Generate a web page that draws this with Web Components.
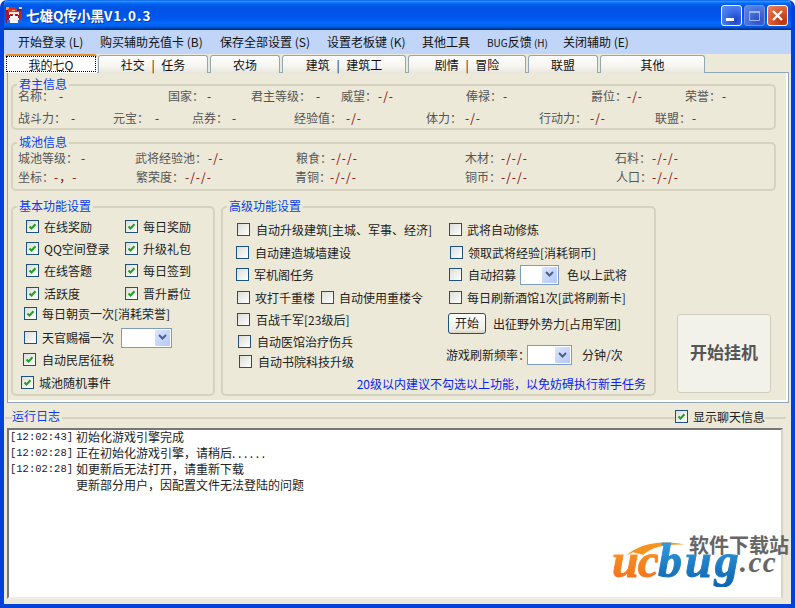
<!DOCTYPE html>
<html>
<head>
<meta charset="utf-8">
<style>
  html, body { margin: 0; padding: 0; background: #fff; }
  body { width: 795px; height: 608px; overflow: hidden; font: 12px/16px "Noto Sans CJK SC", "Liberation Sans", sans-serif; color: #222; }
</style>
</head>
<body>
<xp-window caption="七雄Q传小黑" version="V1.0.3">
  <xp-menu></xp-menu>
  <xp-tabs></xp-tabs>
  <main-panel></main-panel>
  <log-panel></log-panel>
</xp-window>

<script>
// ---- ventana con marco azul y barra de titulo
class XpWindow extends HTMLElement {
  constructor() {
    super();
    this.attachShadow({ mode: "open" });
    this.shadowRoot.innerHTML = `
    <style>
      :host { display: block; width: 795px; height: 608px; position: relative; box-sizing: border-box; }
      .frame { height: 608px; box-sizing: border-box; background: #ece9d8; border-radius: 7px 7px 0 0; overflow: hidden;
        border: solid #0342d8; border-width: 0 4px 4px 4px; display: flex; flex-direction: column; }
      .title { height: 30px; margin: 0 -4px; flex: none; display: flex; align-items: center; padding: 0 5px 0 6px;
        background: linear-gradient(#0058ee 0,#3593ff 4%,#288eff 6%,#127dff 8%,#036ffc 10%,#0262ee 14%,#0057e5 20%,#0054e3 24%,#0055eb 56%,#005bf5 66%,#026afe 76%,#0062ef 86%,#0052d6 92%,#0040ab 94%,#003092 100%); }
      .title svg.logo { width: 16px; height: 16px; flex: none; }
      .caption { margin-left: 4px; color: #fff; font-weight: 700; font-size: 13.5px; line-height: 18px; text-shadow: 1px 1px 0 #0a3aa8; flex: 1; white-space: nowrap; }
      .caption i { font-style: normal; letter-spacing: 1.1px; }
      .btns { display: flex; gap: 2px; margin-right: 2px; }
      .btn { width: 21px; height: 21px; box-sizing: border-box; border: 1px solid #fff; border-radius: 3px; display: block; }
      .min { background: radial-gradient(circle at 70% 75%, #1c44c8 0, #3f74ea 55%, #5c8df0 100%); }
      .max { background: radial-gradient(circle at 70% 75%, #2a50c8 0, #4b75dc 60%, #6289e4 100%); border-color: #6d8fe6; }
      .close { background: radial-gradient(circle at 75% 80%, #b8350f 0, #dc5a30 55%, #ea8a68 100%); }
    </style>
    <div class="frame">
      <div class="title">
        <svg class="logo" viewBox="0 0 16 16" shape-rendering="crispEdges">
          <rect width="16" height="16" fill="#8a1a2a"/>
          <rect x="0" y="0" width="3" height="3" fill="#f0a020"/>
          <rect x="3" y="0" width="6" height="2" fill="#d8242c"/>
          <rect x="9" y="0" width="4" height="2" fill="#2a4fd0"/>
          <rect x="13" y="0" width="3" height="2" fill="#f4d0a0"/>
          <rect x="2" y="2" width="11" height="3" fill="#e0342e"/>
          <rect x="6" y="3" width="3" height="1" fill="#ffb080"/>
          <rect x="11" y="2" width="2" height="2" fill="#28307a"/>
          <rect x="0" y="5" width="3" height="8" fill="#a8162a"/>
          <rect x="13" y="4" width="3" height="9" fill="#c8202c"/>
          <rect x="3" y="5" width="10" height="3" fill="#ffe8d8"/>
          <rect x="4" y="8" width="8" height="3" fill="#fff"/>
          <rect x="4" y="7" width="3" height="2" fill="#c02030"/>
          <rect x="9" y="7" width="3" height="2" fill="#c02030"/>
          <rect x="5" y="8" width="1" height="1" fill="#182a80"/>
          <rect x="10" y="8" width="1" height="1" fill="#182a80"/>
          <rect x="3" y="11" width="10" height="3" fill="#f4f0f0"/>
          <rect x="1" y="13" width="3" height="3" fill="#3a6ae0"/>
          <rect x="4" y="14" width="8" height="2" fill="#fff"/>
          <rect x="12" y="13" width="4" height="3" fill="#2a5fd8"/>
        </svg>
        <span class="caption"></span>
        <div class="btns">
          <span class="btn min"><svg width="19" height="19"><rect x="4" y="12" width="8" height="3" fill="#fff"/></svg></span>
          <span class="btn max"><svg width="19" height="19"><path d="M4.5 5.5h10v9h-10z" fill="none" stroke="#9db6ee"/><rect x="4" y="5" width="11" height="2" fill="#9db6ee"/></svg></span>
          <span class="btn close"><svg width="19" height="19"><path d="M5 5l9 9M14 5l-9 9" stroke="#fff" stroke-width="2.4"/></svg></span>
        </div>
      </div>
      <slot></slot>
    </div>
    <ucbug-mark></ucbug-mark>`;
    this.shadowRoot.querySelector(".caption").innerHTML = `${this.getAttribute("caption")}<i>${this.getAttribute("version")}</i>`;
  }
}

// ---- menu
class XpMenu extends HTMLElement {
  constructor() {
    super();
    this.attachShadow({ mode: "open" });
    const items = [["开始登录 (L)", 14, 64], ["购买辅助充值卡 (B)", 18, 102], ["保存全部设置 (S)", 18, 89], ["设置老板键 (K)", 18, 77],
      ["其他工具", 18, 48], ['<small>BUG</small>反馈<small> (H)</small>', 17, 60], ["关闭辅助 (E)", 16, 67]];
    this.shadowRoot.innerHTML = `
    <style>
      :host { display: flex; height: 24px; background: #c1d5f8; align-items: center; flex: none; font-size: 12px; color: #111; }
      span { white-space: nowrap; display: block; }
      small { font-size: 10px; }
    </style>` + items.map(([t, gap, w]) => `<span style="margin-left:${gap}px;width:${w}px">${t}</span>`).join("");
  }
}

// ---- pestanas
class XpTabs extends HTMLElement {
  constructor() {
    super();
    this.attachShadow({ mode: "open" });
    const tabs = [["我的七Q", 92], ["社交 | 任务", 110], ["农场", 70], ["建筑 | 建筑工", 124], ["剧情 | 冒险", 118], ["联盟", 70], ["其他", 105]];
    this.shadowRoot.innerHTML = `
    <style>
      :host { display: flex; height: 19px; flex: none; padding-left: 1px; gap: 2px; align-items: flex-end; position: relative; z-index: 1; margin-bottom: -1px; }
      .tab { box-sizing: border-box; height: 18px; border: 1px solid #91a7b4; border-bottom: 0; border-radius: 3px 3px 0 0; text-align: center; line-height: 18px; font-size: 12px; color: #111; word-spacing: 4px;
        background: linear-gradient(#fff, #f6f5ef 60%, #e8e6dc); white-space: pre; }
      .on { height: 19px; background: #fff; border: 0; border-top: 2px solid #e68b2c; border-radius: 3px 3px 0 0; line-height: 15px; margin-right: -1px; position: relative; }
      .on b { position: absolute; left: 1px; right: 1px; top: 0; bottom: 1px; border: 1px dotted #000; font-weight: 400; }
    </style>` + tabs.map(([t, w], i) => i == 0
      ? `<div class="tab on" style="width:${w}px"><b>${t}</b></div>`
      : `<div class="tab" style="width:${w}px">${t}</div>`).join("");
  }
}

// ---- caja con titulo (groupbox)
class XpGroup extends HTMLElement {
  constructor() {
    super();
    this.attachShadow({ mode: "open" });
    this.shadowRoot.innerHTML = `
    <style>
      :host { display: block; position: relative; box-sizing: border-box; border: 2px solid #d5d2c0; border-radius: 5px; }
      .legend { position: absolute; left: 4px; top: -8px; padding: 0 2px; background: #ece9d8; color: #0a3fe8; font-size: 12px; line-height: 12px; white-space: nowrap; }
    </style>
    <span class="legend"></span><slot></slot>`;
    this.shadowRoot.querySelector(".legend").textContent = this.getAttribute("legend");
  }
}

// ---- etiqueta + valor en rojo oscuro
class InfoField extends HTMLElement {
  constructor() {
    super();
    this.attachShadow({ mode: "open" });
    const w = this.getAttribute("w"), lw = this.getAttribute("lw");
    this.shadowRoot.innerHTML = `
    <style>
      :host { display: flex; flex: none; width: ${w}px; white-space: nowrap; color: #555; font-size: 12px; line-height: 14px; }
      .l { width: ${lw}px; flex: none; }
      .v { color: #8a0000; letter-spacing: 1px; }
    </style>
    <span class="l">${this.getAttribute("label")}：</span><span class="v">${this.getAttribute("value")}</span>`;
  }
}

// ---- casilla de verificacion
class XpCheck extends HTMLElement {
  constructor() {
    super();
    this.attachShadow({ mode: "open" });
    const on = this.hasAttribute("checked");
    this.shadowRoot.innerHTML = `
    <style>
      :host { display: inline-flex; align-items: center; white-space: nowrap; font-size: 12px; line-height: 14px; color: #222; height: 13px; margin-left: var(--x, 0); }
      .box { width: 13px; height: 13px; flex: none; box-sizing: border-box; border: 1px solid #1c5180; background: linear-gradient(135deg, #dcdcd7, #fff); display: block; margin-right: var(--g, 5px); }
      svg { display: block; }
    </style>
    <span class="box">${on ? '<svg width="11" height="11"><path d="M2.5 5.5l2 2L8.5 3.2" fill="none" stroke="#21a121" stroke-width="2"/></svg>' : ""}</span><span><slot></slot></span>`;
  }
}

// ---- combo vacio
class XpCombo extends HTMLElement {
  constructor() {
    super();
    this.attachShadow({ mode: "open" });
    this.shadowRoot.innerHTML = `
    <style>
      :host { display: inline-flex; box-sizing: border-box; height: 20px; border: 1px solid #7f9db9; background: #fff; justify-content: flex-end; padding: 1px; flex: none; }
      .b { width: 15px; background: linear-gradient(135deg, #dbe6fd, #b3c8f8); border-radius: 1px; display: flex; align-items: center; justify-content: center; }
    </style>
    <span class="b"><svg width="9" height="7"><path d="M1 1l3.5 3.5L8 1" fill="none" stroke="#4d6185" stroke-width="2"/></svg></span>`;
  }
}

// ---- contenido de la primera pestana
class MainPanel extends HTMLElement {
  constructor() {
    super();
    this.attachShadow({ mode: "open" });
    this.shadowRoot.innerHTML = `
    <style>
      :host { display: block; box-sizing: border-box; height: 331px; flex: none; margin: 0 2px 0 3px; border: 1px solid #91a7b4; box-shadow: inset -2px -2px 0 #fff; padding: 11px 12px 0 3px; position: relative; }
      .lords { height: 46px; width: 765px; box-sizing: border-box; padding: 0 0 0 5px; }
      .city { height: 49px; width: 765px; box-sizing: border-box; margin-top: 12px; padding: 4px 0 0 5px; }
      .r { display: flex; height: 24px; align-items: center; }
      .lords .r:first-child { height: 20px; }
      .city .r { height: 19px; }
      .bottom { display: flex; margin-top: 15px; }
      .basic { width: 204px; height: 190px; box-sizing: border-box; flex: none; }
      .adv { width: 435px; height: 190px; box-sizing: border-box; margin-left: 6px; flex: none; position: relative; }
      /* las filas tienen la altura de la casilla, la separacion va en --m */
      .c { display: flex; height: 13px; align-items: center; margin-top: var(--m, 9px); }
      .t { white-space: nowrap; }
      .cols { display: flex; }
      .left { width: 214px; flex: none; }
      .right { flex: 1; }
      .blue { color: #0a1ff0; font-size: 12px; line-height: 14px; white-space: nowrap; margin: 0; position: absolute; right: 8px; bottom: 3px; }
      .go { box-sizing: border-box; width: 38px; height: 21px; border: 1px solid #1c5180; border-radius: 3px; background: linear-gradient(#fff, #f0efe6 80%, #d8d4c4); text-align: center; line-height: 18px; font-size: 12px; margin-right: 7px; flex: none; }
      .start { box-sizing: border-box; width: 94px; height: 79px; margin: 108px 0 0 21px; padding-bottom: 3px; flex: none; border: 1px solid #d0cdbc; border-radius: 3px; background: #f3f2ea; color: #555; font-weight: 700; font-size: 17px; display: flex; align-items: center; justify-content: center; white-space: nowrap; }
    </style>
    <xp-group legend="君主信息" class="lords">
      <div class="r">
        <info-field w="150" lw="41" label="名称" value="-"></info-field>
        <info-field w="83" lw="39" label="国家" value="-"></info-field>
        <info-field w="90" lw="65" label="君主等级" value="-"></info-field>
        <info-field w="125" lw="37" label="威望" value="-/-"></info-field>
        <info-field w="125" lw="37" label="俸禄" value="-"></info-field>
        <info-field w="94" lw="36" label="爵位" value="-/-"></info-field>
        <info-field w="70" lw="37" label="荣誉" value="-"></info-field>
      </div>
      <div class="r">
        <info-field w="95" lw="53" label="战斗力" value="-"></info-field>
        <info-field w="79" lw="42" label="元宝" value="-"></info-field>
        <info-field w="102" lw="40" label="点券" value="-"></info-field>
        <info-field w="132" lw="52" label="经验值" value="-/-"></info-field>
        <info-field w="113" lw="39" label="体力" value="-/-"></info-field>
        <info-field w="116" lw="51" label="行动力" value="-/-"></info-field>
        <info-field w="70" lw="37" label="联盟" value="-"></info-field>
      </div>
    </xp-group>
    <xp-group legend="城池信息" class="city">
      <div class="r">
        <info-field w="117" lw="63" label="城池等级" value="-"></info-field>
        <info-field w="161" lw="73" label="武将经验池" value="-/-"></info-field>
        <info-field w="169" lw="35" label="粮食" value="-/-/-"></info-field>
        <info-field w="150" lw="36" label="木材" value="-/-/-"></info-field>
        <info-field w="100" lw="37" label="石料" value="-/-/-"></info-field>
      </div>
      <div class="r">
        <info-field w="118" lw="36" label="坐标" value="-，-"></info-field>
        <info-field w="159" lw="49" label="繁荣度" value="-/-/-"></info-field>
        <info-field w="170" lw="35" label="青铜" value="-/-/-"></info-field>
        <info-field w="151" lw="36" label="铜币" value="-/-/-"></info-field>
        <info-field w="100" lw="36" label="人口" value="-/-/-"></info-field>
      </div>
    </xp-group>
    <div class="bottom">
      <xp-group legend="基本功能设置" class="basic">
        <div class="c" style="--m:12px"><xp-check checked style="--x:13px;width:99px">在线奖励</xp-check><xp-check checked>每日奖励</xp-check></div>
        <div class="c"><xp-check checked style="--x:13px;width:99px">QQ空间登录</xp-check><xp-check checked>升级礼包</xp-check></div>
        <div class="c"><xp-check checked style="--x:13px;width:99px">在线答题</xp-check><xp-check checked>每日签到</xp-check></div>
        <div class="c" style="--m:10px"><xp-check checked style="--x:13px;width:99px">活跃度</xp-check><xp-check checked>晋升爵位</xp-check></div>
        <div class="c" style="--m:7px"><xp-check checked style="--x:11px">每日朝贡一次[消耗荣誉]</xp-check></div>
        <div class="c" style="--m:11px"><xp-check style="--x:11px;width:98px">天官赐福一次</xp-check><xp-combo style="width:51px;margin-left:-1px"></xp-combo></div>
        <div class="c"><xp-check checked style="--x:10px;--g:6px">自动民居征税</xp-check></div>
        <div class="c" style="--m:10px"><xp-check checked style="--x:8px">城池随机事件</xp-check></div>
      </xp-group>
      <xp-group legend="高级功能设置" class="adv">
        <div class="cols">
          <div class="left">
            <div class="c" style="--m:15px"><xp-check style="--x:14px;--g:6px">自动升级建筑[主城、军事、经济]</xp-check></div>
            <div class="c" style="--m:10px"><xp-check style="--x:13px;--g:6px">自动建造城墙建设</xp-check></div>
            <div class="c"><xp-check style="--x:13px">军机阁任务</xp-check></div>
            <div class="c" style="--m:10px"><xp-check style="--x:14px;--g:5px;width:84px">攻打千重楼</xp-check><xp-check>自动使用重楼令</xp-check></div>
            <div class="c"><xp-check style="--x:14px;--g:6px">百战千军[23级后]</xp-check></div>
            <div class="c"><xp-check style="--x:15px;--g:6px">自动医馆治疗伤兵</xp-check></div>
            <div class="c" style="--m:7px"><xp-check style="--x:16px;--g:6px">自动书院科技升级</xp-check></div>
          </div>
          <div class="right">
            <div class="c" style="--m:15px"><xp-check style="--x:12px">武将自动修炼</xp-check></div>
            <div class="c" style="--m:10px"><xp-check style="--x:13px">领取武将经验[消耗铜币]</xp-check></div>
            <div class="c"><xp-check style="--x:12px;--g:6px;width:71px">自动招募</xp-check><xp-combo style="width:39px"></xp-combo><span class="t" style="margin-left:8px">色以上武将</span></div>
            <div class="c" style="--m:10px"><xp-check style="--x:12px">每日刷新酒馆1次[武将刷新卡]</xp-check></div>
            <div class="c" style="height:21px"><span class="go" style="margin-left:11px">开始</span><span class="t">出征野外势力[占用军团]</span></div>
            <div class="c" style="height:20px;--m:11px"><span class="t" style="margin-left:9px;width:81px">游戏刷新频率：</span><xp-combo style="width:45px"></xp-combo><span class="t" style="margin-left:10px">分钟/次</span></div>
          </div>
        </div>
        <p class="blue">20级以内建议不勾选以上功能，以免妨碍执行新手任务</p>
      </xp-group>
      <div class="start">开始挂机</div>
    </div>`;
  }
}

// ---- registro
class LogPanel extends HTMLElement {
  constructor() {
    super();
    this.attachShadow({ mode: "open" });
    const lines = [["[12:02:43]", "初始化游戏引擎完成"], ["[12:02:28]", '正在初始化游戏引擎，请稍后<span class="d">......</span>'], ["[12:02:28]", "如更新后无法打开，请重新下载"], ["", "更新部分用户，因配置文件无法登陆的问题"]];
    this.shadowRoot.innerHTML = `
    <style>
      :host { display: block; flex: 1; min-height: 0; position: relative; padding: 5px 0 0 1px; box-sizing: border-box; }
      .head { display: flex; align-items: center; height: 20px; position: relative; }
      .head::before { content: ""; position: absolute; left: 0; right: 5px; top: 9px; border-top: 2px solid #d5d2c0; }
      .name { position: relative; margin: 0 0 5px 7px; padding: 0 2px 0 0; background: #ece9d8; color: #0a3fe8; font-size: 12px; line-height: 14px; }
      .chat { position: relative; margin: 0 0 3px 613px; background: #ece9d8; }
      .log { margin: 0 0 0 2px; box-sizing: border-box; width: 776px; height: 171px; background: #fff; border: 2px solid; border-color: #777 #d8d5c6 #efeee3 #777; padding: 0 0 0 1px; font-size: 12px; color: #222; }
      .l { display: flex; white-space: pre; height: 16px; line-height: 14px; }
      .time { width: 66px; font-family: "Liberation Mono", monospace; font-size: 10.5px; flex: none; }
      .d { letter-spacing: 2.6px; }
    </style>
    <div class="head"><span class="name">运行日志</span><xp-check class="chat" checked>显示聊天信息</xp-check></div>
    <div class="log">${lines.map(([a, b]) => `<div class="l"><span class="time">${a}</span><span>${b}</span></div>`).join("")}</div>`;
  }
}

// ---- marca de agua de la esquina
class UcbugMark extends HTMLElement {
  constructor() {
    super();
    this.attachShadow({ mode: "open" });
    this.shadowRoot.innerHTML = `
    <style>
      :host { display: block; position: absolute; left: 610px; top: 535px; width: 184px; height: 60px; }
      svg { position: absolute; left: 16px; top: 4px; }
      .cn { position: absolute; left: 79px; top: 3px; font: 700 20px/13px "Noto Sans CJK SC", sans-serif; color: #666; white-space: nowrap; }
      .en { position: absolute; left: 2px; top: 16px; font: italic 700 48px/20px "Liberation Serif", serif; white-space: nowrap; }
      .uc { background: linear-gradient(#ffa424, #ee6a1e); -webkit-background-clip: text; background-clip: text; color: transparent; letter-spacing: -1px; -webkit-text-stroke: 1px transparent; }
      .bug { background: linear-gradient(#3ba3e4, #0a62ae); -webkit-background-clip: text; background-clip: text; color: transparent; letter-spacing: 3px; -webkit-text-stroke: 1px transparent; }
      .cc { color: #666; font-size: 29px; letter-spacing: 1.5px; vertical-align: 5px; margin-left: -2px; }
    </style>
    <svg width="60" height="18" viewBox="0 0 70 20"><path d="M0 19C14 6 38 0 68 6 46 5 30 9 20 18L8 15z" fill="#f7941d"/></svg>
    <span class="en"><span class="uc">uc</span><span class="bug">bug</span><span class="cc">.cc</span></span>
    <span class="cn">软件下载站</span>`;
  }
}

customElements.define("xp-window", XpWindow);
customElements.define("xp-menu", XpMenu);
customElements.define("xp-tabs", XpTabs);
customElements.define("xp-group", XpGroup);
customElements.define("info-field", InfoField);
customElements.define("xp-check", XpCheck);
customElements.define("xp-combo", XpCombo);
customElements.define("main-panel", MainPanel);
customElements.define("log-panel", LogPanel);
customElements.define("ucbug-mark", UcbugMark);
</script>
</body>
</html>
